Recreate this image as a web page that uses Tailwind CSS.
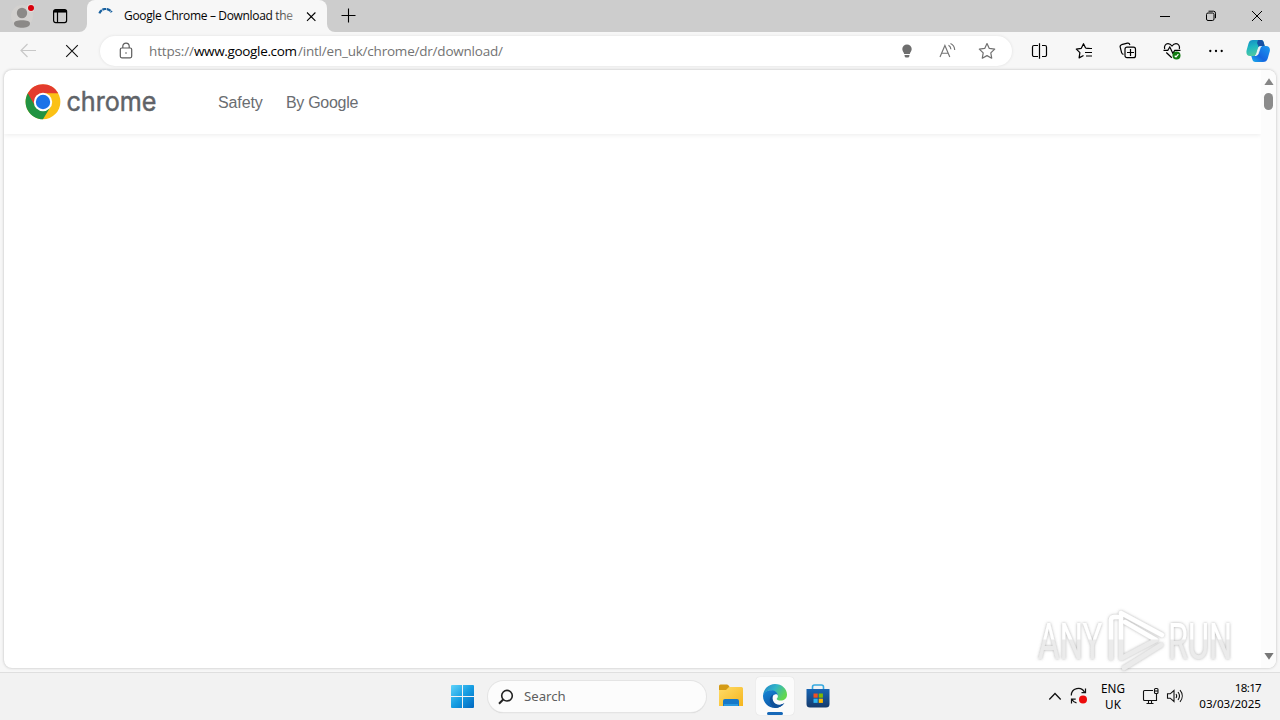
<!DOCTYPE html>
<html lang="en">
<head>
<meta charset="utf-8">
<title>Google Chrome – Download the</title>
<script src="https://cdn.jsdelivr.net/npm/@tailwindcss/browser@4"></script>
</head>
<body class="relative flex h-[720px] w-[1280px] flex-col overflow-hidden bg-[#f7f7f7] font-['Noto_Sans','Open_Sans',sans-serif] text-black">

<!-- Tab strip -->
<div class="flex h-8 shrink-0 items-center bg-[#cdcdcd]">
  <svg class="ml-2.5 h-6 w-6 shrink-0" viewBox="0 0 24 24"><circle cx="12" cy="12" r="11" fill="#d3d1cf"/><circle cx="12" cy="9" r="5.2" fill="#8b8987"/><path d="M4 18.500c0-2.500 3-3.300 8-3.300s8 .8 8 3.300c0 3-4 4.300-8 4.300s-8-1.300-8-4.300z" transform="translate(0 1)" fill="#8b8987"/><circle cx="21" cy="4" r="4" fill="#e4dcda"/><circle cx="21" cy="4" r="3" fill="#d8000c"/></svg>
  <svg class="ml-[18px] h-4 w-4 shrink-0" viewBox="0 0 16 16" fill="none" stroke="#000" stroke-width="1.200"><rect x="1.600" y="1.600" width="13" height="13" rx="2"/><path d="M2 3.300h12.500" stroke-width="2.500"/><path d="M5.500 4v10.500"/></svg>
  <div class="relative ml-[19px] flex h-8 w-[240px] shrink-0 items-center rounded-t-lg bg-[#f7f7f7]">
    <svg class="absolute -left-2 bottom-0 h-2 w-2" viewBox="0 0 8 8"><path d="M8 0v8H0a8 8 0 0 0 8-8z" fill="#f7f7f7"/></svg>
    <svg class="absolute -right-2 bottom-0 h-2 w-2" viewBox="0 0 8 8"><path d="M0 0v8h8a8 8 0 0 1-8-8z" fill="#f7f7f7"/></svg>
    <svg class="ml-2.5 h-4 w-4 shrink-0" viewBox="0 0 16 16" fill="none" stroke="#17609f" stroke-width="2.200"><path d="M2.400 5.300A6.800 6.800 0 0 1 14.600 4.300" stroke-dasharray="4 .6"/></svg>
    <svg class="ml-[11px] h-5 w-[172px] shrink-0 font-['Open_Sans','Noto_Sans',sans-serif]" viewBox="0 0 172 20"><defs><linearGradient id="fade" gradientUnits="userSpaceOnUse" x1="145" x2="174" y1="0" y2="0"><stop stop-color="#000"/><stop offset="1" stop-color="#000" stop-opacity=".35"/></linearGradient></defs><text x="0" y="14" font-size="12" textLength="169" lengthAdjust="spacing" fill="url(#fade)">Google Chrome – Download the</text></svg>
    <svg class="ml-[7px] h-4 w-4 shrink-0" viewBox="0 0 16 16" stroke="#000" stroke-width="1.100"><path d="M4 4.500l8.400 8.400m0-8.400l-8.400 8.400"/></svg>
  </div>
  <svg class="ml-[13px] h-4 w-4 shrink-0" viewBox="0 0 16 16" stroke="#000" stroke-width="1.100"><path d="M1.500 7.500h14M8.500.5v14"/></svg>
  <svg class="ml-auto h-4 w-4 shrink-0" viewBox="0 0 16 16" stroke="#000"><path d="M3 8.500h10"/></svg>
  <svg class="ml-[30px] h-4 w-4 shrink-0" viewBox="0 0 16 16" stroke="#000" fill="none"><rect x="3.500" y="5" width="7.500" height="7.500" rx="1.500"/><path d="M5.500 3.200h5a2 2 0 0 1 2 2v5"/></svg>
  <svg class="mr-[15px] ml-[30px] h-4 w-4 shrink-0" viewBox="0 0 16 16" stroke="#000"><path d="M3 3l10 10m0-10L3 13"/></svg>
</div>

<!-- Toolbar -->
<div class="flex h-[38px] shrink-0 items-center">
  <svg class="ml-[18px] h-5 w-5 shrink-0" viewBox="0 0 20 20" fill="none" stroke="#c8c8c8" stroke-width="1.200"><path d="M18 9.500H3M9.500 3L3 9.500 9.500 16"/></svg>
  <svg class="ml-6 h-5 w-5 shrink-0" viewBox="0 0 20 20" stroke="#111" stroke-width="1.100"><path d="M4.200 4.200l11.600 11.600m0-11.600L4.200 15.800"/></svg>
  <div class="ml-[18px] flex h-[30px] w-[912px] shrink-0 items-center rounded-full bg-white shadow-[0_0_3px_#dedede]">
    <svg class="ml-4 h-5 w-5 shrink-0" viewBox="0 0 20 20" fill="none" stroke="#5c5c5c" stroke-width="1.200"><rect x="4.300" y="7" width="11.400" height="9.800" rx="1.500"/><path d="M6.800 7V5.300a3.200 3.200 0 0 1 6.400 0V7"/><circle cx="10" cy="12" r=".8" fill="#5c5c5c" stroke="none"/></svg>
    <svg class="ml-3 h-5 w-[370px] shrink-0 font-['Open_Sans','Noto_Sans',sans-serif]" viewBox="0 0 370 20" font-size="13.500" fill="#737373"><text x="1" y="15" textLength="45" lengthAdjust="spacing">https://</text><text x="46" y="15" textLength="103" lengthAdjust="spacing" fill="#000">www.google.com</text><text x="150" y="15" textLength="205" lengthAdjust="spacing">/intl/en_uk/chrome/dr/download/</text></svg>
    <svg class="ml-auto h-5 w-5 shrink-0" viewBox="0 0 20 20" fill="#6e6e6e"><path d="M10 3.500a4.700 4.700 0 0 0-4.700 4.600c0 1.900 1.300 2.800 1.900 4.900h5.600c.6-2.100 1.900-3 1.900-4.900A4.700 4.700 0 0 0 10 3.500zM7.500 14h5c-.2 1.800-.6 2.500-1.300 2.500H8.800c-.7 0-1.100-.7-1.300-2.500z"/></svg>
    <svg class="ml-5 h-5 w-5 shrink-0" viewBox="0 0 20 20" fill="none" stroke="#747474" stroke-width="1.150"><path d="M3 16L7.900 4.500 12.800 16M4.600 12.200h6.600M11.500 4.300c1.500.8 2.300 2 2.400 3.900M13.500 2.500c2.600 1.200 4.100 3.500 4.200 6.500"/></svg>
    <svg class="mr-[15px] ml-5 h-5 w-5 shrink-0" viewBox="0 0 20 20" fill="none" stroke="#707070" stroke-width="1.200" stroke-linejoin="round"><path d="M10 2.500l2.300 4.900 5.400.7-3.900 3.800.9 5.300-4.700-2.600-4.700 2.600.9-5.300-3.900-3.800 5.400-.7z"/></svg>
  </div>
  <svg class="ml-[18px] h-5 w-5 shrink-0" viewBox="0 0 20 20" fill="none" stroke="#000" stroke-width="1.200"><path d="M8 4.500H4A1.500 1.500 0 0 0 2.500 6v8A1.500 1.500 0 0 0 4 15.500h4M12 4.500h3A1.500 1.500 0 0 1 16.500 6v8a1.500 1.500 0 0 1-1.500 1.500h-3M9.500 2.300v15.400"/></svg>
  <svg class="ml-6 h-5 w-5 shrink-0" viewBox="0 0 20 20" fill="none" stroke="#000" stroke-width="1.200" stroke-linejoin="round"><path d="M16.500 7.500l-4.900-.5L9.500 2.700 7.300 7.300l-5 .8 3.600 3.600-.8 5.200 4.400-2.400M12 7.500h6M11 11.500h7M12 15h6"/></svg>
  <svg class="ml-6 h-5 w-5 shrink-0" viewBox="0 0 20 20" fill="none" stroke="#000" stroke-width="1.200"><path d="M5.500 13.400c-1.100-.2-1.600-.8-1.900-1.800L2.200 6.200c-.3-1.200.1-2.100 1.400-2.500l5.800-1.500c1.200-.3 2 .1 2.500 1.800"/><rect x="7" y="6.200" width="10.500" height="10.500" rx="2"/><path d="M9 11.500h7M12.500 8v7"/></svg>
  <svg class="ml-6 h-5 w-5 shrink-0" viewBox="0 0 20 20" fill="none" stroke="#000" stroke-width="1.200"><path d="M2.700 8C1.800 5 3.600 2.700 6 2.700c1.700 0 2.800.7 4 2.300 1.200-1.600 2.300-2.300 4-2.300 2.400 0 4.200 2.300 3.300 5.300M1.500 9.300h4.300l2-3.300 3 6.300 2-3h5.700M4.300 11.500l5.500 5.300"/><circle cx="14.500" cy="14.500" r="4" fill="#107c10" stroke="none"/><path d="M12.700 14.700l1.300 1.200 2.400-2.700" stroke="#fff"/></svg>
  <svg class="ml-6 h-5 w-5 shrink-0" viewBox="0 0 20 20"><circle cx="4.300" cy="10" r="1.150"/><circle cx="10" cy="10" r="1.150"/><circle cx="15.700" cy="10" r="1.150"/></svg>
  <svg class="ml-5 h-6 w-6 shrink-0" viewBox="0 0 24 24"><defs><linearGradient id="ca" x1="0" y1="0" x2=".3" y2="1"><stop stop-color="#128bc5"/><stop offset=".5" stop-color="#20b8c1"/><stop offset="1" stop-color="#50c9a0"/></linearGradient><linearGradient id="cb" x1="1" y1="0" x2="0" y2="1"><stop stop-color="#1b9cf0"/><stop offset=".6" stop-color="#1565e0"/><stop offset="1" stop-color="#1bb3ec"/></linearGradient></defs><path d="M7 1h8c2 0 2.500 1.500 3 3.500l.7 2.500H15c-2 0-2.700 1.500-3.200 3.500L10.500 15c-.4 1.500-1.300 2-3 2H4c-3 0-4.200-2.500-3.300-6L2.500 4.500C3.200 2 4.500 1 7 1z" fill="url(#ca)"/><path d="M17 23H9.500c-2 0-2.800-1.200-3.300-3L5.300 17H8c2.500 0 3-1.500 3.500-3.500L13 8.600C13.400 7.500 14.300 7 16 7h4c3 0 4.500 2.500 3.700 5.500l-2 7C21 22 19.500 23 17 23z" fill="url(#cb)"/><path d="M12 1h3c2 0 2.500 1.500 3 3.500l.7 2.500H15c-1 0-1.700.3-2.200 1L11 4z" fill="#1751a4"/><path d="M15.500 7.500h-1c-1.500 0-2 1-2.500 3L10.700 14.500c-.4 1.500-1.100 2-1.700 2h.8c1.500 0 2.200-.8 2.700-2.500l1.500-4.500c.4-1.300.8-1.800 1.500-2z" fill="#f7f7f7" stroke="#f7f7f7" stroke-width=".7"/></svg>
</div>

<!-- Page viewport -->
<main class="mx-1 flex h-[598px] shrink-0 overflow-hidden rounded-lg bg-white shadow-[0_0_3px_#b9b9b9]">
  <div class="flex w-[1257px] flex-col">
    <header class="flex h-16 items-center shadow-[0_1px_5px_#ececec]">
      <svg class="ml-[21px] h-9 w-9 shrink-0" viewBox="0 0 36 36"><circle cx="18" cy="17.800" r="17.400" fill="#fbc116"/><path d="M18 18L2.800 9.200A17.500 17.500 0 0 0 18 35.300l8-13.300z" fill="#229342"/><path d="M2.760 9.200A17.500 17.500 0 0 1 33.240 9.200H18L10.400 22.400z" fill="#e33b2e"/><circle cx="18" cy="18" r="9.200" fill="#fff"/><circle cx="18" cy="18" r="7.200" fill="#1a73e8"/></svg>
      <svg class="ml-1 h-9 w-[96px] shrink-0 font-['Inter','Lato',sans-serif]" viewBox="0 0 96 36"><text x="1.500" y="27" font-size="26.500" textLength="90" lengthAdjust="spacingAndGlyphs" fill="#5f6368" stroke="#5f6368" stroke-width=".5">chrome</text></svg>
      <nav class="ml-[57px] flex gap-6 pt-0.5 font-['Liberation_Sans',Arial,sans-serif] text-base leading-6 text-[#6a6d71]"><span class="w-11 tracking-[-0.1px]">Safety</span><span class="whitespace-nowrap tracking-[-0.3px]">By Google</span></nav>
    </header>
  </div>
  <div class="flex w-[15px] flex-col items-center bg-[#fcfcfc] py-2">
    <svg class="h-2 w-[10px]" viewBox="0 0 10 8"><path d="M5 .3L9.600 7H.4z" fill="#858585"/></svg>
    <div class="mt-[7px] h-[17px] w-[9px] rounded-full bg-[#8b8b8b]"></div>
    <svg class="mt-auto h-2 w-[10px]" viewBox="0 0 10 8"><path d="M5 7.700L.4 1h9.200z" fill="#777"/></svg>
  </div>
</main>

<!-- Taskbar -->
<footer class="mt-1 flex h-12 shrink-0 items-center border-t border-[#dfdfdf] bg-[#f2f2f2]">
  <svg class="ml-[451px] h-[23px] w-[23px] shrink-0" viewBox="0 0 23 23"><defs><linearGradient id="win" gradientUnits="userSpaceOnUse" x1="0" y1="0" x2="23" y2="23"><stop stop-color="#5fd3fa"/><stop offset=".5" stop-color="#159de2"/><stop offset="1" stop-color="#0067c0"/></linearGradient></defs><path d="M0 1q0-1 1-1h10v11H0zM12 0h10q1 0 1 1v10H12zM0 12h11v11H1q-1 0-1-1zM12 12h11v10q0 1-1 1H12z" fill="url(#win)"/></svg>
  <div class="ml-[14px] flex h-[31px] w-[218px] shrink-0 items-center rounded-full bg-[#fcfcfc] shadow-[0_0_0_1px_#e4e4e4,0_1px_1px_#c5c5c5]">
    <svg class="ml-[10px] h-4 w-4 shrink-0" viewBox="0 0 16 16" fill="none" stroke="#222" stroke-width="1.600"><circle cx="9" cy="6.700" r="5.300"/><path d="M5.200 10.500L1 14.700" stroke-width="2"/></svg>
    <span class="ml-[10px] text-[13.2px] text-[#5e5e5e]">Search</span>
  </div>
  <svg class="mb-px ml-[13px] h-6 w-6 shrink-0" viewBox="0 0 24 24"><defs><linearGradient id="fo" x1="0" y1="0" x2="1" y2="1"><stop stop-color="#ffdc68"/><stop offset="1" stop-color="#f5b51d"/></linearGradient></defs><path d="M0 2q0-1.500 1.500-1.500h6.300q1 0 1.800 1L11 3.500V8H0z" fill="#d49b16"/><path d="M0 6h7l3-3h12.500Q24 3 24 4.500V22H0z" fill="url(#fo)"/><path d="M4 22v-5q0-2 2-2h12q2 0 2 2v5z" fill="#1678c8"/><path d="M5 22v-2h14v2z" fill="#2a99df"/></svg>
  <div class="relative mb-px ml-[13px] flex h-[38px] w-[38px] shrink-0 items-center justify-center rounded bg-[#fbfbfb] shadow-[0_0_1px_#ccc]">
    <svg class="h-6 w-6" viewBox="0 0 24 24"><defs><linearGradient id="eg" x1="0" y1="0" x2="1" y2=".5"><stop stop-color="#1f7fc8"/><stop offset=".5" stop-color="#31b4c8"/><stop offset="1" stop-color="#62d750"/></linearGradient><linearGradient id="eb" x1="0" y1="0" x2=".7" y2="1"><stop stop-color="#1687d8"/><stop offset="1" stop-color="#0c4f9e"/></linearGradient></defs><path d="M0 11.500C.5 5 5.500 0 12 0c7 0 12 5 12 10.500 0 4-3 6-6.300 6-2.500 0-4-.8-4-1.600 0-.7 1.200-1.100 1.200-3C14.900 9.300 12 6.500 8 6.500c-4 0-6.500 2-8 5z" fill="url(#eg)"/><path d="M0 11.500C1 8 4.500 6.200 8.500 6.200c4 0 6.500 2.800 6.400 5.500-.4-1.200-1.500-1.700-3-1.300-3 .8-3.500 5.200-1.500 8 2.500 3.400 7.300 3.300 11 .5C19.200 22.200 15.800 24 12 24 5 24-.2 18.400 0 11.500z" fill="url(#eb)"/><path d="M10 10.500c-4 2-5.500 10 2.500 13.400 3.500-.1 6.800-2 8.900-5-3.800 2.500-8.200 2.400-10.500-.7-1.700-2.300-1.700-5.300-.9-7.700z" fill="#0f5199"/></svg>
    <div class="absolute bottom-0 left-[11px] h-[3px] w-4 rounded-full bg-[#1668b8]"></div>
  </div>
  <svg class="mb-px ml-3 h-6 w-6 shrink-0" viewBox="0 0 24 24"><defs><linearGradient id="st" x1="0" y1="0" x2="0" y2="1"><stop stop-color="#1765b4"/><stop offset="1" stop-color="#153a6c"/></linearGradient></defs><path d="M6.500 6V3q0-2 2-2h7q2 0 2 2v3" fill="none" stroke="#35a9e0" stroke-width="1.600"/><path d="M.5 5h23v15q0 3.500-3.500 3.500H4Q.5 23.500.5 20z" fill="url(#st)"/><path d="M7.500 9.500h4.200v4.200H7.500z" fill="#f25022"/><path d="M12.700 9.500h4.200v4.200h-4.200z" fill="#7fba00"/><path d="M7.500 14.700h4.200v4.200H7.500z" fill="#2eb5f0"/><path d="M12.700 14.700h4.200v4.200h-4.200z" fill="#ffb900"/></svg>
  <svg class="ml-auto h-4 w-4 shrink-0" viewBox="0 0 16 16" fill="none" stroke="#111" stroke-width="1.300"><path d="M2.300 10.500L8 4.500l5.700 6"/></svg>
  <svg class="mb-px ml-[7px] h-[18px] w-[18px] shrink-0" viewBox="0 0 18 18" fill="none" stroke="#111" stroke-width="1.200"><path d="M1.300 8.500A7 7 0 0 1 14.500 5.200M15.500 1.500v4.200h-4M1.500 16.500v-4.300h4.200M2 12.500c.8 1.600 2.200 2.800 4.500 3.400"/><circle cx="13" cy="12.500" r="4" fill="#ec0b0b" stroke="none"/></svg>
  <div class="mb-px ml-[11px] w-[28px] text-center text-[11.7px] leading-4"><div>ENG</div><div>UK</div></div>
  <svg class="mb-[2px] ml-[15px] h-[18px] w-[18px] shrink-0" viewBox="0 0 18 18" fill="none" stroke="#111" stroke-width="1.100"><path d="M11 3.500H2.500a1 1 0 0 0-1 1v8a1 1 0 0 0 1 1H14.500V7M4.500 16.500h7M6.500 13.500v3M9.500 13.500v3"/><rect x="12.500" y="1.500" width="3.500" height="5" rx="1"/><path d="M12.500 4h3.500"/></svg>
  <svg class="mb-[2px] ml-[6px] h-[18px] w-[18px] shrink-0" viewBox="0 0 18 18" fill="none" stroke="#111" stroke-width="1.100"><path d="M1.500 6.800h2.700L8 3.500v11l-3.800-3.300H1.500zM10 7c.8 1.200.8 2.800 0 4M12 5c1.800 2.400 1.800 5.600 0 8M14 3.200c3 3.500 3 8.100 0 11.600"/></svg>
  <div class="mr-[19px] mb-px ml-[13px] w-[64px] text-right text-[11.6px] leading-4 whitespace-nowrap"><div class="tracking-[-0.7px]">18:17</div><div>03/03/2025</div></div>
</footer>

<!-- Translucent watermark floating over the page and taskbar -->
<svg class="absolute top-[604px] left-[1030px] h-[76px] w-[214px]" viewBox="0 0 214 76">
  <defs><filter id="soft" x="-10%" y="-10%" width="120%" height="120%"><feDropShadow dx="0" dy="0" stdDeviation="1.500" flood-color="#777" flood-opacity=".6"/></filter><linearGradient id="wm" gradientUnits="userSpaceOnUse" x1="0" y1="35" x2="0" y2="36"><stop stop-color="#fff"/><stop offset="1" stop-color="#ebebeb"/></linearGradient><linearGradient id="wt" gradientUnits="userSpaceOnUse" x1="0" y1="-20" x2="0" y2="-19"><stop stop-color="#fff"/><stop offset="1" stop-color="#ebebeb"/></linearGradient></defs>
  <g filter="url(#soft)" font-family="Roboto, sans-serif" font-size="50">
    <text transform="translate(8 55) scale(.66 1)" fill="url(#wt)">ANY</text>
    <text transform="translate(138 55) scale(.65 1)" fill="url(#wt)">RUN</text>
    <path d="M81 54V16q0-3 4-3h3M91 54V9L132 31M95 18L126 36 92 54M94 64L131 41" fill="none" stroke="url(#wm)" stroke-width="4.500" stroke-linejoin="round" stroke-linecap="round"/>
  </g>
</svg>
</body>
</html>
